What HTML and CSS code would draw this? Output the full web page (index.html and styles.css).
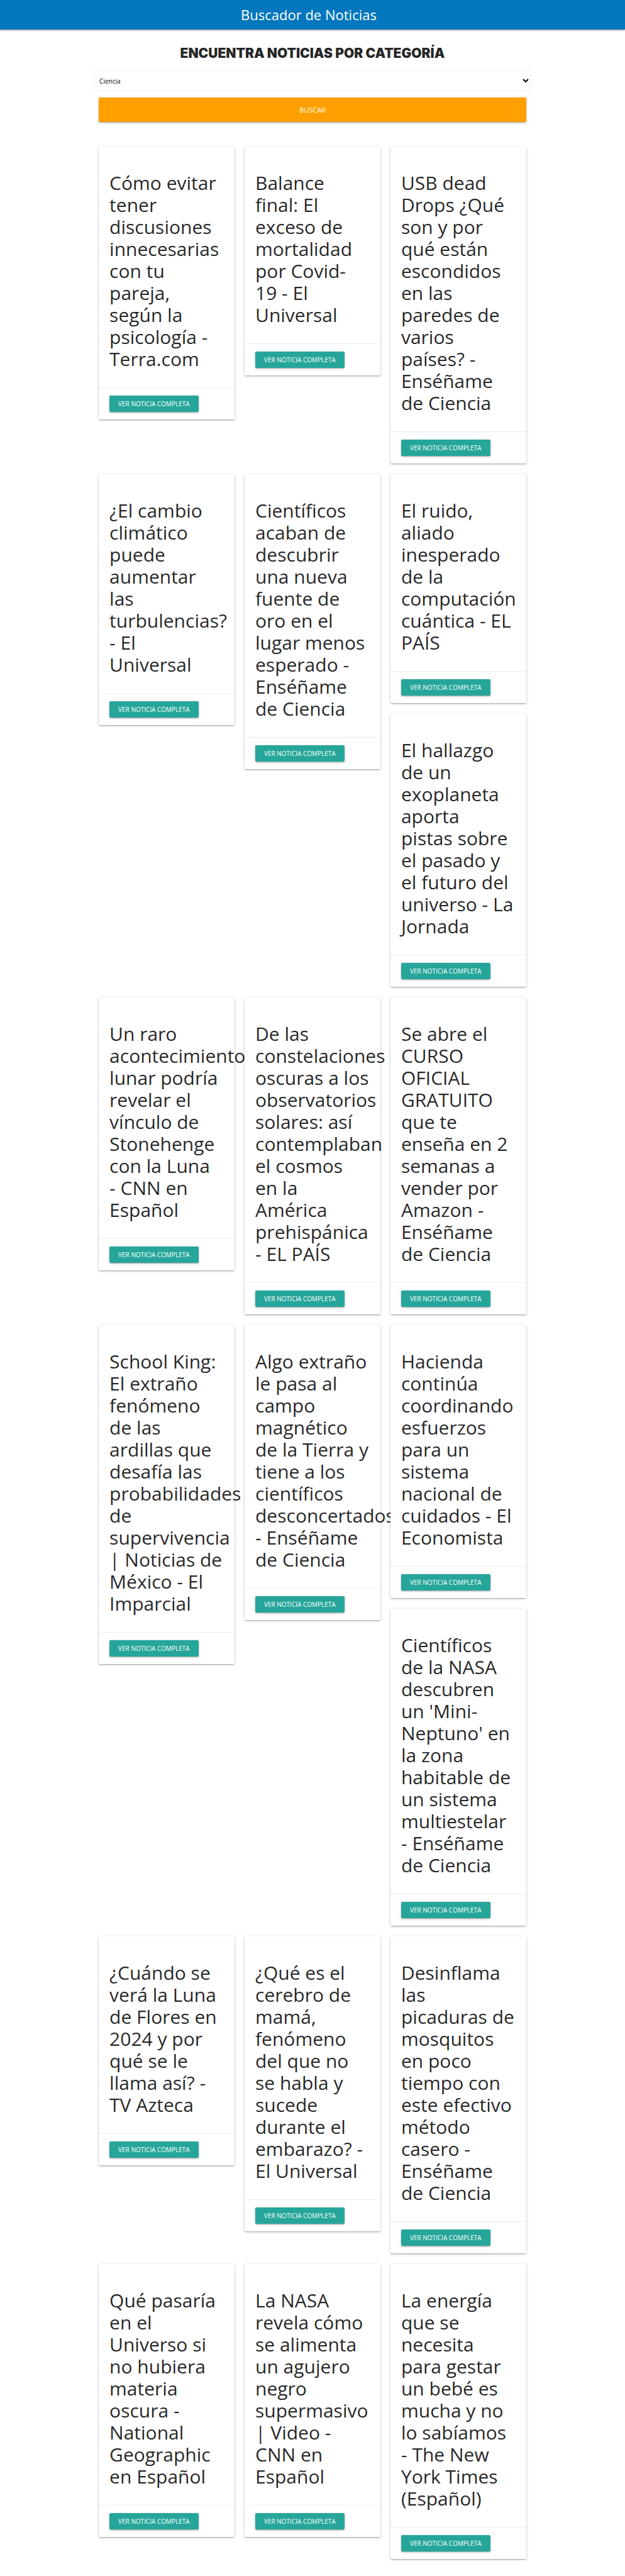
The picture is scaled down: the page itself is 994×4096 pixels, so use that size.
FILE: index.html
```
<!DOCTYPE html>
<html lang="es">
<head>
<meta charset="utf-8">
<meta name="viewport" content="width=device-width, initial-scale=1">
<title>Buscador de Noticias</title>
<link rel="stylesheet" href="styles.css">
</head>
<body>
<header class="navbar"><a class="brand" href="#">Buscador de Noticias</a></header>
<main class="container">
  <h1 class="title">Encuentra noticias por categoría</h1>
  <form class="search">
    <select class="category" aria-label="Categoría">
      <option>Ciencia</option>
    </select>
    <button class="search-button" type="button">Buscar</button>
  </form>
  <section class="results">
    <div class="column"><article class="card"><h3 class="headline">Cómo evitar tener discusiones innecesarias con tu pareja, según la psicología - Terra.com</h3><div class="action"><a class="button" href="#">Ver noticia completa</a></div></article></div>
    <div class="column"><article class="card"><h3 class="headline">Balance final: El exceso de mortalidad por Covid-<br>19 - El Universal</h3><div class="action"><a class="button" href="#">Ver noticia completa</a></div></article></div>
    <div class="column"><article class="card"><h3 class="headline">USB dead Drops ¿Qué son y por qué están escondidos en las paredes de varios países? - Enséñame de Ciencia</h3><div class="action"><a class="button" href="#">Ver noticia completa</a></div></article></div>

    <div class="column"><article class="card"><h3 class="headline">¿El cambio climático puede aumentar las turbulencias? - El<br>Universal</h3><div class="action"><a class="button" href="#">Ver noticia completa</a></div></article></div>
    <div class="column"><article class="card"><h3 class="headline">Científicos acaban de descubrir una nueva fuente de oro en el lugar menos esperado - Enséñame de Ciencia</h3><div class="action"><a class="button" href="#">Ver noticia completa</a></div></article></div>
    <div class="column">
      <article class="card"><h3 class="headline">El ruido, aliado inesperado de la computación cuántica - EL PAÍS</h3><div class="action"><a class="button" href="#">Ver noticia completa</a></div></article>
      <article class="card"><h3 class="headline">El hallazgo de un exoplaneta aporta pistas sobre el pasado y el futuro del universo - La Jornada</h3><div class="action"><a class="button" href="#">Ver noticia completa</a></div></article>
    </div>

    <div class="column"><article class="card"><h3 class="headline">Un raro acontecimiento lunar podría revelar el vínculo de Stonehenge con la Luna<br>- CNN en Español</h3><div class="action"><a class="button" href="#">Ver noticia completa</a></div></article></div>
    <div class="column"><article class="card"><h3 class="headline">De las constelaciones oscuras a los observatorios solares: así contemplaban el cosmos en la América prehispánica - EL PAÍS</h3><div class="action"><a class="button" href="#">Ver noticia completa</a></div></article></div>
    <div class="column"><article class="card"><h3 class="headline">Se abre el CURSO OFICIAL GRATUITO que te enseña en 2 semanas a vender por Amazon - Enséñame de Ciencia</h3><div class="action"><a class="button" href="#">Ver noticia completa</a></div></article></div>

    <div class="column"><article class="card"><h3 class="headline">School King: El extraño fenómeno de las ardillas que desafía las probabilidades de supervivencia | Noticias de México - El Imparcial</h3><div class="action"><a class="button" href="#">Ver noticia completa</a></div></article></div>
    <div class="column"><article class="card"><h3 class="headline">Algo extraño le pasa al campo magnético de la Tierra y tiene a los científicos desconcertados - Enséñame de Ciencia</h3><div class="action"><a class="button" href="#">Ver noticia completa</a></div></article></div>
    <div class="column">
      <article class="card"><h3 class="headline">Hacienda continúa coordinando esfuerzos para un sistema nacional de cuidados - El Economista</h3><div class="action"><a class="button" href="#">Ver noticia completa</a></div></article>
      <article class="card"><h3 class="headline">Científicos de la NASA descubren un 'Mini-Neptuno' en la zona habitable de un sistema multiestelar - Enséñame de Ciencia</h3><div class="action"><a class="button" href="#">Ver noticia completa</a></div></article>
    </div>

    <div class="column"><article class="card"><h3 class="headline">¿Cuándo se verá la Luna de Flores en 2024 y por qué se le llama así? - TV Azteca</h3><div class="action"><a class="button" href="#">Ver noticia completa</a></div></article></div>
    <div class="column"><article class="card"><h3 class="headline">¿Qué es el cerebro de mamá, fenómeno del que no se habla y sucede durante el embarazo? - El Universal</h3><div class="action"><a class="button" href="#">Ver noticia completa</a></div></article></div>
    <div class="column"><article class="card"><h3 class="headline">Desinflama las picaduras de mosquitos en poco tiempo con este efectivo método casero - Enséñame de Ciencia</h3><div class="action"><a class="button" href="#">Ver noticia completa</a></div></article></div>

    <div class="column"><article class="card"><h3 class="headline">Qué pasaría en el Universo si no hubiera materia oscura - National Geographic en Español</h3><div class="action"><a class="button" href="#">Ver noticia completa</a></div></article></div>
    <div class="column"><article class="card"><h3 class="headline">La NASA revela cómo se alimenta un agujero negro supermasivo | Video - CNN en Español</h3><div class="action"><a class="button" href="#">Ver noticia completa</a></div></article></div>
    <div class="column"><article class="card"><h3 class="headline">La energía que se necesita para gestar un bebé es mucha y no lo sabíamos - The New York Times (Español)</h3><div class="action"><a class="button" href="#">Ver noticia completa</a></div></article></div>
  </section>
</main>
</body>
</html>
```
FILE: styles.css
```
* { box-sizing: border-box; }
body {
  margin: 0;
  background: #fff;
  color: rgba(0, 0, 0, 0.87);
  font-family: "Open Sans", "Noto Sans", sans-serif;
}
.navbar {
  display: flex;
  justify-content: center;
  align-items: center;
  height: 47px;
  padding-right: 12px;
  background: #0277bd;
  box-shadow: 0 1px 2px rgba(0, 0, 0, 0.14), 0 2px 1px -1px rgba(0, 0, 0, 0.12), 0 1px 4px rgba(0, 0, 0, 0.2);
}
.brand { color: #fff; font-size: 22px; line-height: 47px; text-decoration: none; }
.container { width: 70%; margin: 0 auto; }
.title {
  margin: 24px 0 14px;
  font-family: Inter, "Open Sans", sans-serif;
  font-size: 21px;
  font-weight: 900;
  line-height: 27px;
  text-align: center;
  text-transform: uppercase;
}
.search { display: flex; flex-direction: column; gap: 10px; }
.category {
  width: 100%;
  height: 33px;
  padding: 4px;
  border: 1px solid #f2f2f2;
  border-radius: 2px;
  background: rgba(255, 255, 255, 0.9);
  color: #000;
  font: 10px "Open Sans", "Noto Sans", sans-serif;
}
.search-button {
  height: 39px;
  margin: 0 8px;
  border: 0;
  border-radius: 2px;
  background: #ffa000;
  color: #fff;
  font: 11px "Open Sans", "Noto Sans", sans-serif;
  text-transform: uppercase;
  box-shadow: 0 1px 2px rgba(0, 0, 0, 0.14), 0 2px 1px -1px rgba(0, 0, 0, 0.12), 0 1px 4px rgba(0, 0, 0, 0.2);
}
.results {
  display: grid;
  grid-template-columns: repeat(3, minmax(0, 1fr));
  gap: 17px 16px;
  margin: 39px 8px 26px;
}
.column { display: flex; flex-direction: column; gap: 17px; }
.card {
  position: relative;
  border-radius: 2px;
  background: #fff;
  box-shadow: 0 1px 2px rgba(0, 0, 0, 0.14), 0 2px 1px -1px rgba(0, 0, 0, 0.12), 0 1px 4px rgba(0, 0, 0, 0.2);
}
.headline {
  margin: 0;
  padding: 40px 17px 28px;
  font-size: 30px;
  font-weight: 400;
  line-height: 35px;
}
.action { padding: 12px 17px; border-top: 1px solid rgba(160, 160, 160, 0.2); }
.button {
  display: block;
  width: fit-content;
  padding: 0 14px;
  border-radius: 2px;
  background: #26a69a;
  color: #fff;
  font-size: 10px;
  line-height: 26px;
  text-decoration: none;
  text-transform: uppercase;
  box-shadow: 0 1px 2px rgba(0, 0, 0, 0.14), 0 2px 1px -1px rgba(0, 0, 0, 0.12), 0 1px 4px rgba(0, 0, 0, 0.2);
}
```
